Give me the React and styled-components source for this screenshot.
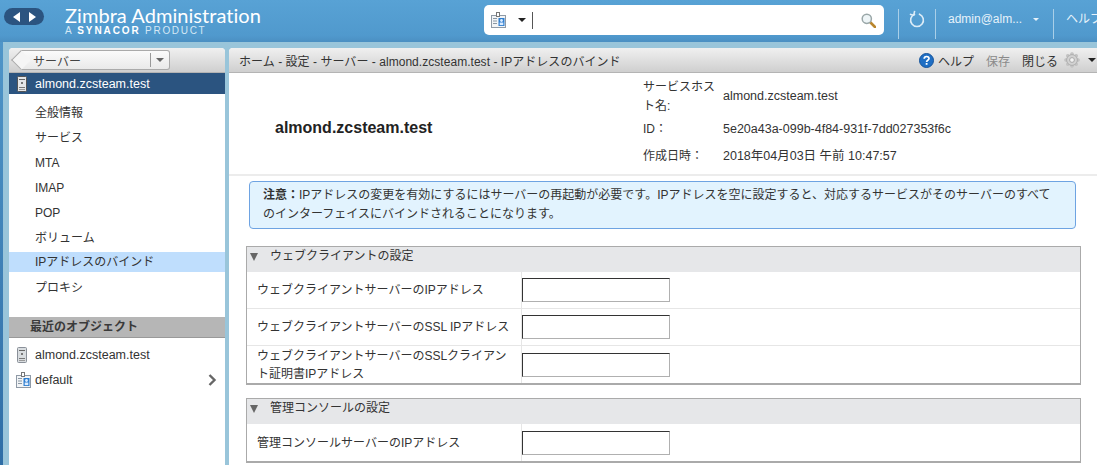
import React from 'react'
import styled, { createGlobalStyle } from 'styled-components'

const GlobalStyle = createGlobalStyle`
  html, body { margin: 0; padding: 0; height: 100%; overflow: hidden; }
  body {
    font-family: "Liberation Sans", "Noto Sans CJK JP", sans-serif;
    font-size: 12px;
    color: #333;
  }
`

const Page = styled.div`
  width: 1097px;
  height: 465px;
  display: flex;
  flex-direction: column;
  overflow: hidden;
  background: #99c5da;
`

const TopBar = styled.div`
  height: 42px;
  flex-shrink: 0;
  display: flex;
  align-items: flex-start;
  background: linear-gradient(#58a2d5, #5099cd 85%, #4b8fc2);
  white-space: nowrap;
`

const NavPill = styled.div`
  width: 40px;
  height: 17px;
  margin: 8px 0 0 4px;
  border-radius: 9px;
  background: #2b5480;
  display: flex;
  align-items: center;
  justify-content: center;
  gap: 9px;
  flex-shrink: 0;
`

const Logo = styled.div`
  width: 419px;
  margin-left: 21px;
  color: #fff;
  flex-shrink: 0;
`

const LogoTitle = styled.div`
  font-family: "Lato", sans-serif;
  font-size: 20px;
  line-height: 21px;
  margin-top: 5px;
  letter-spacing: 0.05px;
`

const LogoSub = styled.div`
  font-family: "Liberation Sans", sans-serif;
  font-size: 10px;
  line-height: 9px;
  letter-spacing: 1.7px;
  color: #d5e8f5;
  b { color: #fff; font-weight: 700; letter-spacing: 1.9px; }
`

const SearchBox = styled.div`
  width: 400px;
  height: 30px;
  margin-top: 5px;
  border-radius: 5px;
  background: #fff;
  display: flex;
  align-items: center;
  padding: 0 8px 0 7px;
  box-sizing: border-box;
  flex-shrink: 0;
`

const Caret = styled.span`
  display: inline-block;
  width: 0;
  height: 0;
  flex-shrink: 0;
  margin-left: ${p => p.$gap || 0}px;
  border-left: ${p => p.$size || 4}px solid transparent;
  border-right: ${p => p.$size || 4}px solid transparent;
  border-top: ${p => p.$height || p.$size || 4}px solid ${p => p.$color || '#222'};
`

const SearchCursor = styled.span`
  width: 1px;
  height: 17px;
  background: #555;
  margin-left: 6px;
  flex: none;
`

const SearchSpacer = styled.div`
  flex: 1;
`

const HeaderDivider = styled.div`
  width: 1px;
  height: 30px;
  margin-top: 9px;
  margin-left: ${p => p.$gap || 0}px;
  background: #a9cfe8;
  flex-shrink: 0;
`

const RefreshSlot = styled.div`
  width: 36px;
  height: 30px;
  margin-top: 4px;
  display: flex;
  justify-content: center;
  align-items: center;
  flex-shrink: 0;
`

const UserName = styled.div`
  display: flex;
  align-items: center;
  width: 117px;
  padding-left: 12px;
  box-sizing: border-box;
  margin-top: 11px;
  height: 16px;
  color: #e6f2fa;
  font-size: 12px;
  flex-shrink: 0;
`

const HelpLink = styled.div`
  margin: 11px 0 0 12px;
  color: #e6f2fa;
  font-size: 12px;
  line-height: 16px;
`

const Body = styled.div`
  flex: 1;
  min-height: 0;
  display: flex;
`

const EdgeStrip = styled.div`
  width: 3px;
  background: linear-gradient(#4f95c8, #2f6ea6);
  flex-shrink: 0;
`

const Sidebar = styled.aside`
  width: 216px;
  margin: 6px 0 0 6px;
  background: #fff;
  border-radius: 4px 4px 0 0;
  flex-shrink: 0;
  overflow: hidden;
`

const Toolbar = styled.div`
  height: 25px;
  box-sizing: border-box;
  background: linear-gradient(#f0f0f0, #cfcfcf);
  border-bottom: 1px solid #b4b4b4;
  display: flex;
  align-items: center;
`

const BackSelect = styled.div`
  position: relative;
  width: 149px;
  height: 20px;
  margin-left: 12px;
  box-sizing: border-box;
  border: 1px solid #aaa;
  border-left: none;
  border-radius: 0 3px 3px 0;
  background: linear-gradient(#fbfbfb, #e9e9e9);
  display: flex;
  align-items: center;
  padding-left: 12px;
  color: #444;
  &::before {
    content: '';
    position: absolute;
    left: -7px;
    top: 2px;
    width: 13px;
    height: 13px;
    background: #f5f5f5;
    border-left: 1px solid #aaa;
    border-bottom: 1px solid #aaa;
    transform: rotate(45deg);
  }
`

const BackLabel = styled.span`
  position: relative;
  flex: 1;
`

const BackArrow = styled.span`
  width: 18px;
  height: 14px;
  border-left: 1px solid #999;
  display: flex;
  align-items: center;
  justify-content: center;
`

const ServerRow = styled.div`
  height: 21px;
  background: #2b5480;
  color: #fff;
  font-size: 12.5px;
  display: flex;
  align-items: center;
  padding-left: 8px;
  gap: 8px;
`

const NavList = styled.nav`
  padding-top: 7px;
  height: 223px;
  box-sizing: border-box;
`

const NavItem = styled.div`
  padding-left: 26px;
  background: ${p => (p.$active ? '#bfdefd' : 'transparent')};
  height: ${p => (p.$active ? '20px' : '25px')};
  line-height: ${p => (p.$active ? '20px' : '25px')};
  margin: ${p => (p.$active ? '1px 0 4px' : '0')};
`

const RecentHeader = styled.div`
  height: 21px;
  box-sizing: border-box;
  background: #b6b6b6;
  border-bottom: 1px solid #999;
  font-weight: 700;
  line-height: 20px;
  padding-left: 21px;
  color: #3a3a3a;
`

const RecentList = styled.div`
  padding-top: 4px;
`

const RecentItem = styled.div`
  height: 25px;
  display: flex;
  align-items: center;
  gap: ${p => p.$gap}px;
  padding-left: ${p => p.$indent}px;
  padding-right: 8px;
  font-size: 12.5px;
`

const RecentLabel = styled.span`
  flex: 1;
`

const Main = styled.main`
  flex: 1;
  margin: 6px 0 0 4px;
  background: #fff;
  border-radius: 4px 0 0 0;
  overflow: hidden;
  min-width: 0;
`

const Breadcrumb = styled.div`
  flex: 1;
  padding-left: 10px;
  color: #333;
  letter-spacing: 0.04px;
`

const ToolButton = styled.span`
  color: ${p => (p.$disabled ? '#8a8a8a' : '#333')};
  margin-left: 12px;
  display: flex;
  align-items: center;
  gap: 4px;
`

const GearSlot = styled.span`
  display: flex;
  align-items: center;
  margin: 0 1px 0 6px;
  gap: 8px;
`

const ServerHead = styled.header`
  height: 103px;
  box-sizing: border-box;
  border-bottom: 2px solid #ececec;
  display: flex;
  align-items: center;
`

const ServerTitle = styled.h1`
  margin: 0;
  width: 414px;
  padding-left: 46px;
  box-sizing: border-box;
  font-size: 16px;
  font-weight: 700;
  color: #222;
  position: relative;
  top: 4px;
`

const InfoGrid = styled.dl`
  margin: 0;
  display: grid;
  grid-template-columns: 80px 1fr;
  grid-template-rows: 38px 27px 27px;
  align-items: center;
  line-height: 19px;
`

const InfoLabel = styled.dt`
  width: 72px;
  color: #333;
`

const InfoValue = styled.dd`
  margin: 0;
  color: #333;
  font-size: 12.5px;
`

const Content = styled.div`
  padding: 5px 16px 0 17px;
`

const Notice = styled.div`
  margin: 0 5px 17px 3px;
  height: 48px;
  box-sizing: border-box;
  border: 1px solid #6ea3e2;
  border-radius: 4px;
  background: #e2f3fe;
  padding: 4px 13px;
  line-height: 19px;
  font-size: 12px;
  b { font-weight: 700; }
`

const Section = styled.section`
  border: 1px solid #aaa;
  border-bottom-width: 2px;
  margin-bottom: 13px;
`

const SectionHead = styled.div`
  height: 25px;
  background: #e6e7e9;
  display: flex;
  align-items: center;
  padding-left: 3px;
  gap: 12px;
  line-height: 17px;
  padding-bottom: 6px;
  box-sizing: border-box;
`

const FormRow = styled.div`
  height: 37px;
  box-sizing: border-box;
  display: flex;
  border-bottom: ${p => (p.$last ? 'none' : '1px solid #e6e6e6')};
`

const FieldLabel = styled.label`
  width: 275px;
  box-sizing: border-box;
  padding: 0 10px;
  border-right: 1px solid #e6e6e6;
  display: flex;
  align-items: center;
  line-height: 18px;
  flex-shrink: 0;
`

const FieldCell = styled.div`
  display: flex;
  align-items: center;
`

const TextInput = styled.input`
  width: 148px;
  height: 24px;
  box-sizing: border-box;
  margin: 0;
  padding: 0 2px;
  border: 1px solid #b0b0b0;
  border-top-color: #333;
  border-left-color: #333;
  background: #fff;
  outline: none;
`

function ServerIcon({ light }) {
  return (
    <svg width="10" height="16" viewBox="0 0 10 16">
      <rect x="0.5" y="0.5" width="9" height="15" rx="1" fill={light ? '#d9dde0' : '#e4e6e8'} stroke={light ? '#8a9099' : '#555'} />
      <rect x="2" y="3" width="6" height="1" fill="#666" />
      <rect x="4" y="6" width="2" height="2" fill="#777" />
      <rect x="2" y="11" width="6" height="1" fill="#777" />
      <rect x="2" y="13" width="6" height="1" fill="#999" />
    </svg>
  )
}

function BadgeIcon() {
  return (
    <svg width="15" height="16" viewBox="0 0 15 16">
      <rect x="0.5" y="3.5" width="14" height="12" fill="#f2f4f6" stroke="#8f9aa6" />
      <rect x="5.5" y="0.5" width="3" height="4" fill="#fff" stroke="#777" />
      <rect x="7.5" y="6" width="6" height="8" fill="#2f7fd0" />
      <circle cx="10.5" cy="8.5" r="1.4" fill="#dcecff" />
      <rect x="8.7" y="10.5" width="3.6" height="2.6" fill="#dcecff" />
      <rect x="2" y="6" width="4" height="1" fill="#8a97a3" />
      <rect x="2" y="8.5" width="4" height="1" fill="#8a97a3" />
      <rect x="2" y="11" width="4" height="1" fill="#8a97a3" />
    </svg>
  )
}

function MagnifierIcon() {
  return (
    <svg width="15" height="15" viewBox="0 0 15 15">
      <path d="M9 9l5 5" stroke="#b9862e" strokeWidth="2.6" strokeLinecap="round" />
      <circle cx="5.8" cy="5.8" r="4.6" fill="#eef5f7" stroke="#9aa7a8" strokeWidth="1.5" />
    </svg>
  )
}

function RefreshIcon() {
  return (
    <svg width="16" height="18" viewBox="0 0 16 18" fill="none">
      <path d="M5.5 4.2a6.4 6.4 0 1 0 5 0" stroke="#dcecf7" strokeWidth="1.6" strokeLinecap="round" />
      <path d="M5 0.8v4.4h-4" stroke="#dcecf7" strokeWidth="1.6" transform="rotate(12 5 4)" />
    </svg>
  )
}

function HelpIcon() {
  return (
    <svg width="15" height="15" viewBox="0 0 15 15">
      <circle cx="7.5" cy="7.5" r="7" fill="#1f6fc4" stroke="#16549b" />
      <path d="M5.2 5.8c0-3 4.8-3 4.8-.3 0 1.7-2.4 1.8-2.4 3.4" fill="none" stroke="#fff" strokeWidth="1.7" />
      <rect x="6.7" y="10" width="1.8" height="1.8" fill="#fff" />
    </svg>
  )
}

function GearIcon() {
  const teeth = [0, 45, 90, 135, 180, 225, 270, 315]
  return (
    <svg width="16" height="16" viewBox="0 0 16 16">
      {teeth.map(a => (
        <rect key={a} x="6.5" y="0.5" width="3" height="15" rx="1" fill="#c4c4c4" transform={`rotate(${a} 8 8)`} />
      ))}
      <circle cx="8" cy="8" r="5.4" fill="#d2d2d2" stroke="#aeaeae" />
      <circle cx="8" cy="8" r="2.4" fill="#f3f3f3" stroke="#a8a8a8" />
    </svg>
  )
}

function Arrow({ left }) {
  return (
    <svg width="7" height="10" viewBox="0 0 7 10">
      <path d={left ? 'M7 0v10L0 5z' : 'M0 0v10l7-5z'} fill="#fff" />
    </svg>
  )
}

function Chevron() {
  return (
    <svg width="9" height="12" viewBox="0 0 9 12" fill="none">
      <path d="M1.5 1l5 5-5 5" stroke="#666" strokeWidth="2.4" />
    </svg>
  )
}

const navItems = ['全般情報', 'サービス', 'MTA', 'IMAP', 'POP', 'ボリューム', 'IPアドレスのバインド', 'プロキシ']

const sections = [
  {
    title: 'ウェブクライアントの設定',
    fields: [
      'ウェブクライアントサーバーのIPアドレス',
      'ウェブクライアントサーバーのSSL IPアドレス',
      'ウェブクライアントサーバーのSSLクライアント証明書IPアドレス',
    ],
  },
  {
    title: '管理コンソールの設定',
    fields: ['管理コンソールサーバーのIPアドレス'],
  },
]

function App() {
  return (
    <Page>
      <GlobalStyle />
      <TopBar>
        <NavPill>
          <Arrow left />
          <Arrow />
        </NavPill>
        <Logo>
          <LogoTitle>Zimbra Administration</LogoTitle>
          <LogoSub>A <b>SYNACOR</b> PRODUCT</LogoSub>
        </Logo>
        <SearchBox>
          <BadgeIcon />
          <Caret $gap={12} />
          <SearchCursor />
          <SearchSpacer />
          <MagnifierIcon />
        </SearchBox>
        <HeaderDivider $gap={14} />
        <RefreshSlot>
          <RefreshIcon />
        </RefreshSlot>
        <HeaderDivider />
        <UserName>
          admin@alm...
          <Caret $size={3} $gap={11} $color="#e6f2fa" />
        </UserName>
        <HeaderDivider />
        <HelpLink>ヘルプ</HelpLink>
      </TopBar>
      <Body>
        <EdgeStrip />
        <Sidebar>
          <Toolbar>
            <BackSelect>
              <BackLabel>サーバー</BackLabel>
              <BackArrow>
                <Caret $color="#666" />
              </BackArrow>
            </BackSelect>
          </Toolbar>
          <ServerRow>
            <ServerIcon />
            almond.zcsteam.test
          </ServerRow>
          <NavList>
            {navItems.map(item => (
              <NavItem key={item} $active={item === 'IPアドレスのバインド'}>{item}</NavItem>
            ))}
          </NavList>
          <RecentHeader>最近のオブジェクト</RecentHeader>
          <RecentList>
            <RecentItem $indent={8} $gap={8}>
              <ServerIcon light />
              <RecentLabel>almond.zcsteam.test</RecentLabel>
            </RecentItem>
            <RecentItem $indent={7} $gap={4}>
              <BadgeIcon />
              <RecentLabel>default</RecentLabel>
              <Chevron />
            </RecentItem>
          </RecentList>
        </Sidebar>
        <Main>
          <Toolbar>
            <Breadcrumb>ホーム - 設定 - サーバー - almond.zcsteam.test - IPアドレスのバインド</Breadcrumb>
            <ToolButton><HelpIcon />ヘルプ</ToolButton>
            <ToolButton $disabled>保存</ToolButton>
            <ToolButton>閉じる</ToolButton>
            <GearSlot>
              <GearIcon />
              <Caret $size={4} />
            </GearSlot>
          </Toolbar>
          <ServerHead>
            <ServerTitle>almond.zcsteam.test</ServerTitle>
            <InfoGrid>
              <InfoLabel>サービスホスト名:</InfoLabel>
              <InfoValue>almond.zcsteam.test</InfoValue>
              <InfoLabel>ID：</InfoLabel>
              <InfoValue>5e20a43a-099b-4f84-931f-7dd027353f6c</InfoValue>
              <InfoLabel>作成日時：</InfoLabel>
              <InfoValue>2018年04月03日 午前 10:47:57</InfoValue>
            </InfoGrid>
          </ServerHead>
          <Content>
            <Notice>
              <b>注意：</b>IPアドレスの変更を有効にするにはサーバーの再起動が必要です。IPアドレスを空に設定すると、対応するサービスがそのサーバーのすべてのインターフェイスにバインドされることになります。
            </Notice>
            {sections.map(section => (
              <Section key={section.title}>
                <SectionHead>
                  <Caret $size={4} $height={8} $color="#666" />
                  {section.title}
                </SectionHead>
                {section.fields.map((field, index) => (
                  <FormRow key={field} $last={index === section.fields.length - 1}>
                    <FieldLabel>{field}</FieldLabel>
                    <FieldCell>
                      <TextInput />
                    </FieldCell>
                  </FormRow>
                ))}
              </Section>
            ))}
          </Content>
        </Main>
      </Body>
    </Page>
  )
}

export default App
